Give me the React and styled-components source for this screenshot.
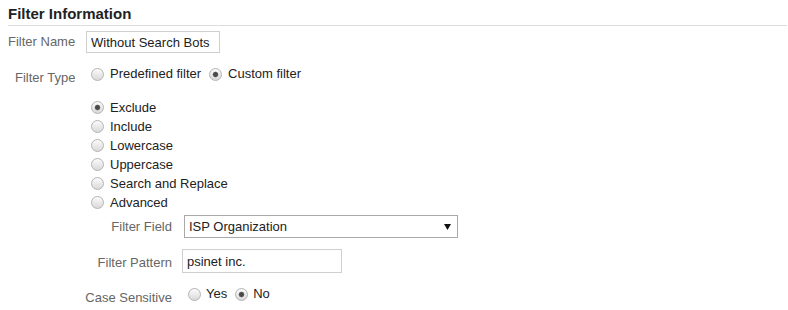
import React from 'react';
import styled, { createGlobalStyle } from 'styled-components';

const Global = createGlobalStyle`
  html, body { margin: 0; padding: 0; background: #fff; }
  body {
    font-family: "Liberation Sans", Arial, sans-serif;
    font-size: 13px;
    color: #222;
  }
`;

const Page = styled.div`
  width: 788px;
  box-sizing: border-box;
  padding: 0 1px 0 8px;
`;

const Heading = styled.h2`
  margin: 0;
  padding: 5px 0 2px;
  font-size: 15px;
  line-height: 18px;
  font-weight: bold;
  color: #222;
  border-bottom: 1px solid #dcdcdc;
`;

const Row = styled.div`
  display: flex;
  align-items: ${(p) => p.$align || 'center'};
  margin-top: ${(p) => p.$mt || 0}px;
  margin-left: ${(p) => p.$ml || 0}px;
`;

const Label = styled.div`
  flex-shrink: 0;
  box-sizing: border-box;
  width: ${(p) => p.$w}px;
  padding-left: ${(p) => p.$pl || 0}px;
  padding-top: ${(p) => p.$pt || 0}px;
  margin-right: ${(p) => p.$mr || 0}px;
  text-align: ${(p) => (p.$right ? 'right' : 'left')};
  line-height: 16px;
  color: #666;
`;

const TextInput = styled.input`
  box-sizing: border-box;
  width: ${(p) => p.$w}px;
  height: ${(p) => p.$h}px;
  margin: 0;
  padding: 0 4px;
  border: 1px solid #cfcfcf;
  font-family: inherit;
  font-size: 13px;
  color: #222;
  background: #fff;
  outline: none;
`;

const RadioGroup = styled.div`
  display: flex;
  align-items: center;
  line-height: 16px;
  margin-left: ${(p) => p.$ml || 0}px;
`;

const Option = styled.label`
  display: flex;
  align-items: center;
  margin-right: ${(p) => p.$mr || 0}px;
  color: #222;
  white-space: nowrap;
`;

const Radio = styled.input.attrs({ type: 'radio' })`
  appearance: none;
  -webkit-appearance: none;
  box-sizing: border-box;
  width: 13px;
  height: 13px;
  margin: 0 ${(p) => (p.$gap != null ? p.$gap : 6)}px 0 0;
  border-radius: 50%;
  border: 1px solid #b4b4b4;
  background: linear-gradient(#fbfbfb, #d9d9d9);
  flex-shrink: 0;
  &:checked {
    background: radial-gradient(circle, #4a4a4a 0 2px, #8a8a8a 2.6px, transparent 3.2px),
      linear-gradient(#fbfbfb, #d9d9d9);
  }
`;

const RadioList = styled.div`
  display: flex;
  flex-direction: column;
  margin: 12px 0 0 83px;
`;

const ListItem = styled.label`
  display: flex;
  align-items: center;
  height: 19px;
  color: #222;
`;

const SelectBox = styled.div`
  box-sizing: border-box;
  width: 274px;
  height: 23px;
  margin-left: 2px;
  padding: 0 6px 0 4px;
  display: flex;
  align-items: center;
  justify-content: space-between;
  border: 1px solid #a9a9a9;
  background: #fff;
  color: #222;
`;

const Caret = () => (
  <svg width="7" height="6" viewBox="0 0 7 6">
    <path d="M0 0 H7 L3.5 6 Z" fill="#111" />
  </svg>
);

const types = ['Exclude', 'Include', 'Lowercase', 'Uppercase', 'Search and Replace', 'Advanced'];

export default function App() {
  return (
    <Page>
      <Global />
      <Heading>Filter Information</Heading>

      <Row $mt={5}>
        <Label $w={78}>Filter Name</Label>
        <TextInput $w={134} $h={22} defaultValue="Without Search Bots" />
      </Row>

      <Row $mt={13} $align="flex-start">
        <Label $w={78} $pl={7} $pt={4}>Filter Type</Label>
        <RadioGroup $ml={5}>
          <Option $mr={8}>
            <Radio name="ftype" readOnly />
            Predefined filter
          </Option>
          <Option>
            <Radio name="ftype" defaultChecked readOnly />
            Custom filter
          </Option>
        </RadioGroup>
      </Row>

      <RadioList>
        {types.map((t, i) => (
          <ListItem key={t}>
            <Radio name="kind" defaultChecked={i === 0} readOnly />
            {t}
          </ListItem>
        ))}
      </RadioList>

      <Row $mt={3} $ml={72}>
        <Label $w={92} $mr={10} $right>Filter Field</Label>
        <SelectBox>
          <span>ISP Organization</span>
          <Caret />
        </SelectBox>
      </Row>

      <Row $mt={11} $ml={72}>
        <Label $w={92} $mr={10} $right $pt={3}>Filter Pattern</Label>
        <TextInput $w={160} $h={24} defaultValue="psinet inc." />
      </Row>

      <Row $mt={13} $ml={72} $align="flex-start">
        <Label $w={92} $mr={10} $right $pt={4}>Case Sensitive</Label>
        <RadioGroup $ml={6}>
          <Option $mr={8}>
            <Radio name="case" $gap={5} readOnly />
            Yes
          </Option>
          <Option>
            <Radio name="case" $gap={5} defaultChecked readOnly />
            No
          </Option>
        </RadioGroup>
      </Row>
    </Page>
  );
}
